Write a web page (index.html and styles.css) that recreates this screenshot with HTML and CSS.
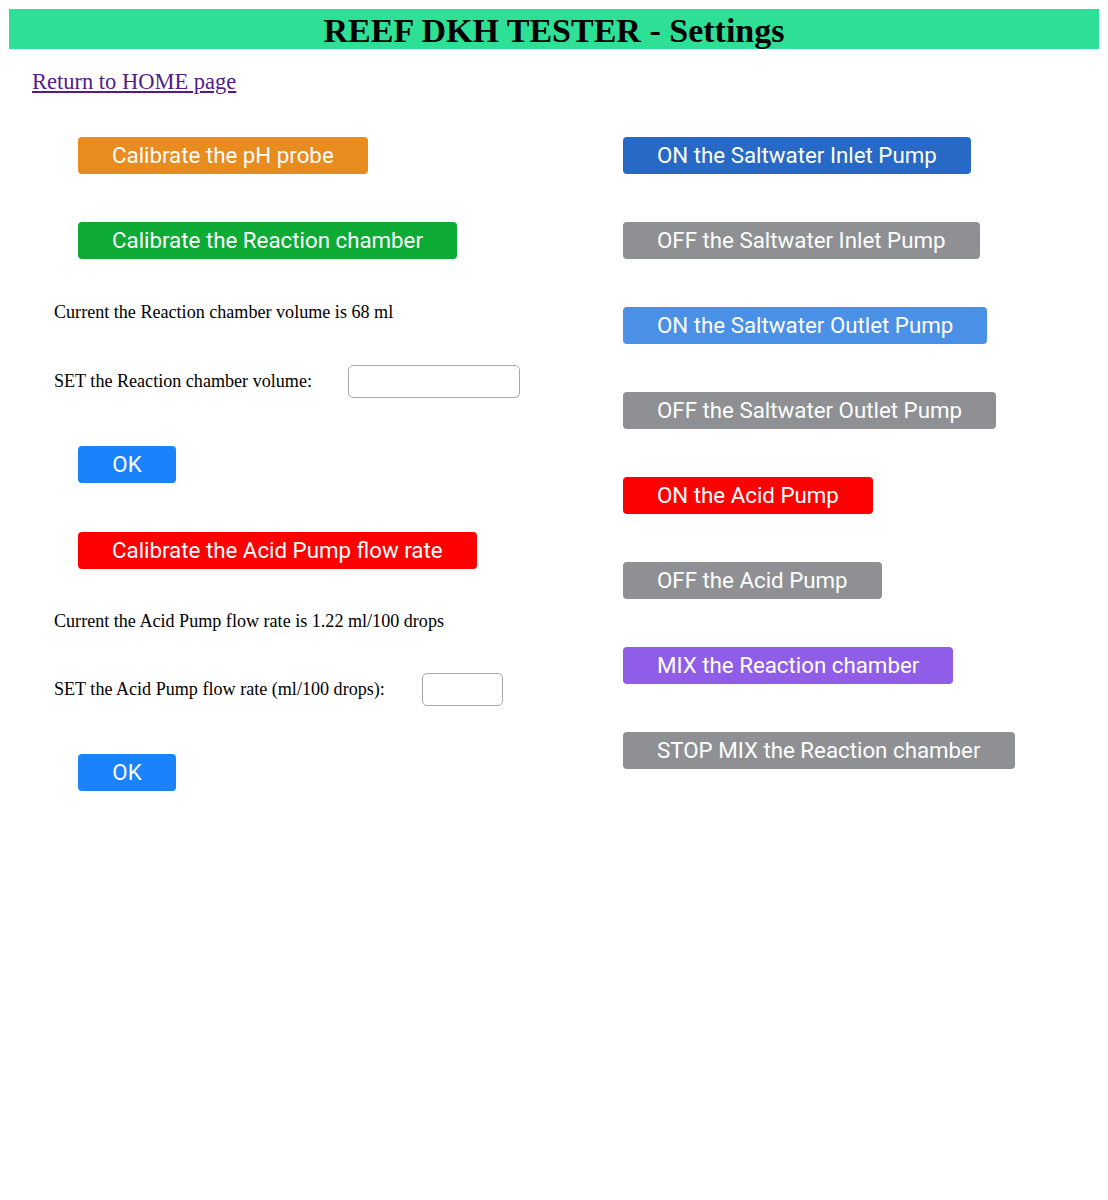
FILE: index.html
```html
<!DOCTYPE html>
<html lang="en">
<head>
  <meta charset="UTF-8">
  <meta name="viewport" content="width=device-width, initial-scale=1.0">
  <title>REEF DKH TESTER - Settings</title>
  <link rel="stylesheet" href="styles.css">
</head>
<body>
  <header class="title-bar">
    <h1>REEF DKH TESTER - Settings</h1>
  </header>

  <p class="home-link"><a href="#">Return to HOME page</a></p>

  <div class="settings">
    <!-- calibration column -->
    <div class="col-left">
      <button class="btn btn-orange">Calibrate the pH probe</button>
      <button class="btn btn-green">Calibrate the Reaction chamber</button>

      <p class="info info-volume">Current the Reaction chamber volume is 68 ml</p>
      <div class="set-row set-volume">
        <label for="volume">SET the Reaction chamber volume:</label>
        <input type="text" id="volume" class="input-volume">
      </div>
      <button class="btn btn-ok ok-volume">OK</button>

      <button class="btn btn-red btn-acid">Calibrate the Acid Pump flow rate</button>

      <p class="info info-flow">Current the Acid Pump flow rate is 1.22 ml/100 drops</p>
      <div class="set-row set-flow">
        <label for="flow">SET the Acid Pump flow rate (ml/100 drops):</label>
        <input type="text" id="flow" class="input-flow">
      </div>
      <button class="btn btn-ok ok-flow">OK</button>
    </div>

    <!-- pump switches -->
    <div class="col-right">
      <button class="btn btn-blue">ON the Saltwater Inlet Pump</button>
      <button class="btn btn-gray">OFF the Saltwater Inlet Pump</button>
      <button class="btn btn-lightblue">ON the Saltwater Outlet Pump</button>
      <button class="btn btn-gray">OFF the Saltwater Outlet Pump</button>
      <button class="btn btn-red">ON the Acid Pump</button>
      <button class="btn btn-gray">OFF the Acid Pump</button>
      <button class="btn btn-purple">MIX the Reaction chamber</button>
      <button class="btn btn-gray">STOP MIX the Reaction chamber</button>
    </div>
  </div>
</body>
</html>
```

FILE: styles.css
```css
:root {
  --header-green: #2ee096;
  --orange: #e98c1f;
  --green: #0daa35;
  --ok-blue: #1a82fb;
  --blue: #2769c6;
  --light-blue: #4a90e6;
  --gray: #8e9093;
  --red: #ff0000;
  --purple: #905de8;
}

body {
  margin: 0;
  padding: 9px;
  font-family: 'Liberation Serif', 'Times New Roman', serif;
  color: #000;
  background-color: #fff;
}

.title-bar {
  background-color: var(--header-green);
  height: 40px;
  text-align: center;
}

.title-bar h1 {
  margin: 0;
  font-size: 34px;
  line-height: 43px;
  font-weight: bold;
}

.home-link {
  margin: 20px 0 0 23px;
  font-size: 22.5px;
  line-height: 26px;
}

.home-link a {
  color: #551a8b;
}

.settings {
  display: grid;
  grid-template-columns: 614px 1fr;
  margin-top: 42px;
}

.col-left {
  display: flex;
  flex-direction: column;
  align-items: flex-start;
  padding-left: 45px;
}

.col-right {
  display: flex;
  flex-direction: column;
  align-items: flex-start;
  gap: 48px;
}

.btn {
  font-family: 'Roboto', 'Helvetica', sans-serif;
  font-size: 22.3px;
  height: 37px;
  line-height: 37px;
  padding: 0 34px;
  border: none;
  border-radius: 4px;
  color: #fff;
  cursor: pointer;
}

.col-left .btn {
  margin-left: 24px;
}

.btn-orange { background-color: var(--orange); }
.btn-green { background-color: var(--green); margin-top: 48px; }
.btn-blue { background-color: var(--blue); }
.btn-lightblue { background-color: var(--light-blue); }
.btn-gray { background-color: var(--gray); }
.btn-red { background-color: var(--red); }
.btn-purple { background-color: var(--purple); }

.btn-ok {
  background-color: var(--ok-blue);
  width: 98px;
  padding: 0;
}

.ok-volume { margin-top: 48px; }
.ok-flow { margin-top: 48px; }

.btn-acid {
  margin-top: 49px;
}

.info {
  font-size: 18.1px;
  line-height: 20px;
  margin: 0;
}

.info-volume { margin-top: 43px; }
.info-flow { margin-top: 42px; }

.set-row {
  display: flex;
  align-items: center;
  font-size: 18.1px;
}

.set-volume { margin-top: 43px; }
.set-flow { margin-top: 42px; }

.set-row input {
  height: 33px;
  box-sizing: border-box;
  border: 1px solid #a9a9a9;
  border-radius: 5px;
  padding: 0 6px;
  font-size: 16px;
}

.input-volume {
  width: 172px;
  margin-left: 36px;
}

.input-flow {
  width: 81px;
  margin-left: 37px;
}
```
